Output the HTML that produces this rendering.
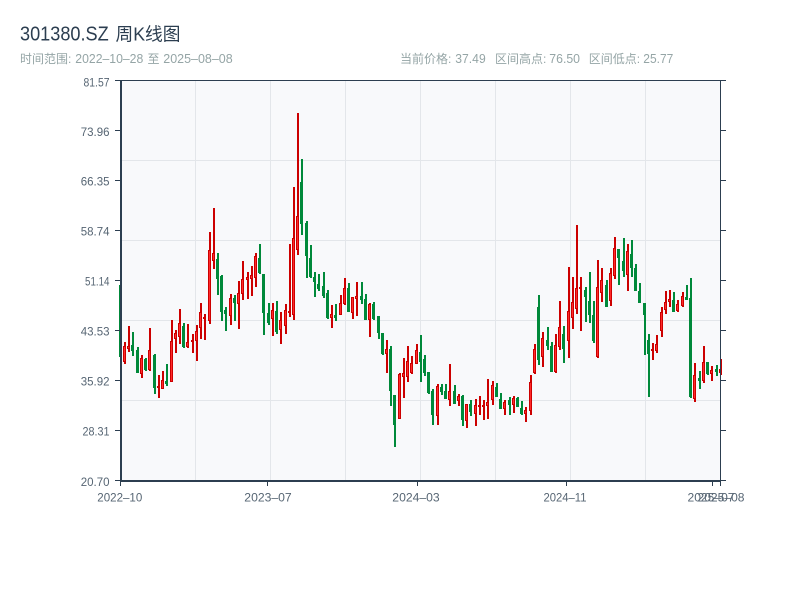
<!DOCTYPE html>
<html lang="zh">
<head>
<meta charset="utf-8">
<title>301380.SZ 周K线图</title>
<style>
html,body{margin:0;padding:0;background:#fff;width:800px;height:600px;overflow:hidden}
svg{display:block}
text{font-family:"Liberation Sans","Noto Sans CJK SC",sans-serif}
.t{font-size:20px;fill:#2c3e50}
.tc{font-size:18px;fill:#2c3e50}
.s{font-size:12px;fill:#95a5a6}
.n{font-size:12.5px;fill:#95a5a6}
.a{font-size:11.5px;fill:#566573}
</style>
</head>
<body>
<svg id="c" xmlns="http://www.w3.org/2000/svg" width="800" height="600" viewBox="0 0 800 600">
<text class="t" x="20" y="40.5" textLength="88.7" lengthAdjust="spacingAndGlyphs">301380.SZ</text>
<text class="tc" x="115.5" y="40.5" textLength="65" lengthAdjust="spacingAndGlyphs">周K线图</text>
<text class="s" x="20" y="63">时间范围:</text>
<text class="n" x="75.3" y="63" textLength="68" lengthAdjust="spacingAndGlyphs">2022–10–28</text>
<text class="s" x="147.5" y="63">至</text>
<text class="n" x="163.3" y="63" textLength="69.4" lengthAdjust="spacingAndGlyphs">2025–08–08</text>
<text class="s" x="400" y="63">当前价格:</text>
<text class="n" x="455.3" y="63" textLength="30.4" lengthAdjust="spacingAndGlyphs">37.49</text>
<text class="s" x="495" y="63">区间高点:</text>
<text class="n" x="549.3" y="63" textLength="30.7" lengthAdjust="spacingAndGlyphs">76.50</text>
<text class="s" x="588.7" y="63">区间低点:</text>
<text class="n" x="643.3" y="63" textLength="30" lengthAdjust="spacingAndGlyphs">25.77</text>
<g class="a" text-anchor="end">
<text x="109.5" y="86.5" textLength="26" lengthAdjust="spacingAndGlyphs">81.57</text>
<text x="109.5" y="136">73.96</text>
<text x="109.5" y="185.5">66.35</text>
<text x="109.5" y="235.5">58.74</text>
<text x="109.5" y="285.5" textLength="24.5" lengthAdjust="spacingAndGlyphs">51.14</text>
<text x="109.5" y="335.5">43.53</text>
<text x="109.5" y="385.5">35.92</text>
<text x="109.5" y="435.5" textLength="27" lengthAdjust="spacingAndGlyphs">28.31</text>
<text x="109.5" y="486">20.70</text>
</g>
<g class="a" text-anchor="middle">
<text x="119.8" y="501.5" textLength="45" lengthAdjust="spacingAndGlyphs">2022–10</text>
<text x="268" y="501.5" textLength="47.4" lengthAdjust="spacingAndGlyphs">2023–07</text>
<text x="416" y="501.5" textLength="47.4" lengthAdjust="spacingAndGlyphs">2024–03</text>
<text x="565" y="501.5" textLength="43" lengthAdjust="spacingAndGlyphs">2024–11</text>
<text x="711" y="501.5" textLength="47" lengthAdjust="spacingAndGlyphs">2025–07</text>
<text x="721" y="501.5" textLength="47" lengthAdjust="spacingAndGlyphs">2025–08</text>
</g>
<g id="p" shape-rendering="crispEdges"></g>
</svg>
<script>
(function(){
var RD='#cc0000',RI='#ff2a2a',GR='#00893a',SP='#2c3e50',GD='#e3e6ea';
var o=[];
function R(x,y,w,h,f){o.push('<rect x="'+x+'" y="'+y+'" width="'+w+'" height="'+h+'" fill="'+f+'"/>');}
R(121,81,600,400,'#f8f9fb');
[195,270,345,420,495,570,645].forEach(function(x){R(x,81,1,400,GD);});
[160,240,320,400].forEach(function(y){R(121,y,600,1,GD);});
var B=[
[200,[
'g',255,470,255,470,
'r',438,486,426,492,
'r',438,447,378,456,
'g',435,453,396,468,
'g',450,519,441,519,
'r',474,522,465,534,
'g',477,510,474,513,
'r',450,510,384,513,
'g',465,564,462,582,
'r',558,564,525,594,
'r',540,567,513,567,
'g',543,552,492,558,
'r',423,546,360,546,
'r',399,417,390,459,
'r',369,411,327,432,
'g',378,441,369,444,
'r',426,441,372,444,
'r',420,426,402,459,
'r',393,423,375,483,
'r',336,384,309,417,
'r',351,357,342,420,
'r',150,363,96,372,
'r',159,183,24,207,
'g',177,237,159,285,
'g',228,336,225,363,
'g',330,342,321,393,
'r',294,348,282,375,
'g',294,309,285,363,
'r',279,312,243,387,
'r',237,282,183,300,
'r',231,240,216,297,
'r',225,237,198,288,
'r',168,234,159,261,
'g',174,219,132,222,
'g',222,339,222,405,
'g',339,369,309,375]],
[105,[
'r',615,642,594,693,
'g',618,681,588,687,
'r',645,675,621,717,
'r',615,663,597,687,
'r',618,624,417,636,
'r',399,630,246,645,
'r',333,435,24,450,
'g',231,357,162,390,
'g',354,453,348,519,
'g',459,516,420,519,
'g',516,531,501,576,
'g',537,552,507,558,
'g',543,573,501,579,
'g',564,639,555,642,
'r',627,639,600,669,
'g',630,639,597,648,
'r',594,630,570,630,
'r',549,597,519,600,
'g',549,621,534,621,
'r',576,624,576,642,
'r',573,582,531,633,
'g',573,585,531,597,
'g',582,645,567,645,
'r',597,645,594,696,
'g',597,642,591,645,
'g',633,684,633,702,
'g',684,747,684,750,
'r',732,747,705,804]],
[300,[
'g',147,272,138,318,
'g',285,375,285,441,
'r',222,357,219,357,
'r',219,231,174,294,
'r',183,231,138,246,
'r',189,219,168,222,
'r',150,192,132,192,
'g',156,186,105,246,
'g',177,219,165,228,
'g',216,279,216,282,
'g',273,345,267,375,
'r',258,348,252,375,
'g',261,276,252,285,
'g',273,297,252,297,
'r',273,300,192,318,
'g',273,312,255,312,
'r',288,303,282,318,
'g',288,360,285,378,
'r',312,363,312,384,
'g',312,336,300,348,
'r',315,342,297,378,
'r',315,321,288,345,
'r',315,321,300,360,
'r',306,318,237,357,
'r',255,300,243,315,
'g',261,291,249,291,
'g',297,327,279,327,
'r',306,327,300,345,
'g',300,315,291,345,
'r',294,315,288,339,
'g',294,321,291,321,
'g',324,342,303,345,
'r',330,342,321,366,
'r',246,333,225,345,
'r',147,219,132,222,
'g',21,180,-15,195,
'r',114,171,96,201,
'g',120,138,81,150,
'g',138,216,126,216,
'r',135,216,102,219,
'r',81,141,3,150,
'g',102,147,78,189]],
[220,[
'r',273,363,141,414,
'r',246,294,171,327,
'r',204,267,15,282,
'r',201,207,171,333,
'g',210,231,201,306,
'g',243,285,156,309,
'g',285,363,243,369,
'r',201,411,120,414,
'r',180,219,144,246,
'g',195,261,180,261,
'r',159,243,144,258,
'r',84,168,51,177,
'g',87,114,87,195,
'g',123,153,54,171,
'r',93,165,72,213,
'g',102,144,60,171,
'g',144,213,132,213,
'g',213,249,189,249,
'g',249,285,249,405,
'g',360,402,342,531,
'r',387,393,369,420,
'r',372,393,345,399,
'r',276,333,261,351,
'r',246,270,213,282,
'r',237,246,210,261,
'g',240,276,216,276,
'r',252,273,240,276,
'r',228,258,216,261,
'g',231,240,195,240,
'g',234,531,174,534,
'r',465,537,429,546,
'g',474,483,453,507,
'r',426,483,378,489,
'g',426,462,426,465,
'r',450,462,438,483,
'g',447,456,435,468,
'r',447,459,417,465]]
];
var i=0;
B.forEach(function(b){
 var y0=b[0],d=b[1];
 for(var k=0;k<d.length;k+=5){
  var red=d[k]==='r',col=red?RD:GR;
  var bt=Math.round(y0+d[k+1]/3),bb=Math.round(y0+d[k+2]/3),wt=Math.round(y0+d[k+3]/3),wb=Math.round(y0+d[k+4]/3);
  var l=Math.round(120.8+4.225*i-1);
  R(l,wt,2,Math.max(wb-wt,1),col);
  R(l-1,bt,3,Math.max(bb-bt,1),col);
  if(red&&bb-bt>2)R(l,bt+1,1,bb-bt-2,RI);
  i++;
 }
});
R(120,80,601,1,SP);
R(120,80,2,402,SP);
R(720,80,1,402,SP);
R(120,480,601,2,SP);
[81,131,181,231,281,331,381,431,481].forEach(function(y){
 R(115,y-1,5,1,SP);
 R(721,y-1,5,1,SP);
});
[120,267,417,566,712,720].forEach(function(x){R(x,482,1,4,SP);});
document.getElementById('p').innerHTML=o.join('');
})();
</script>
</body>
</html>
